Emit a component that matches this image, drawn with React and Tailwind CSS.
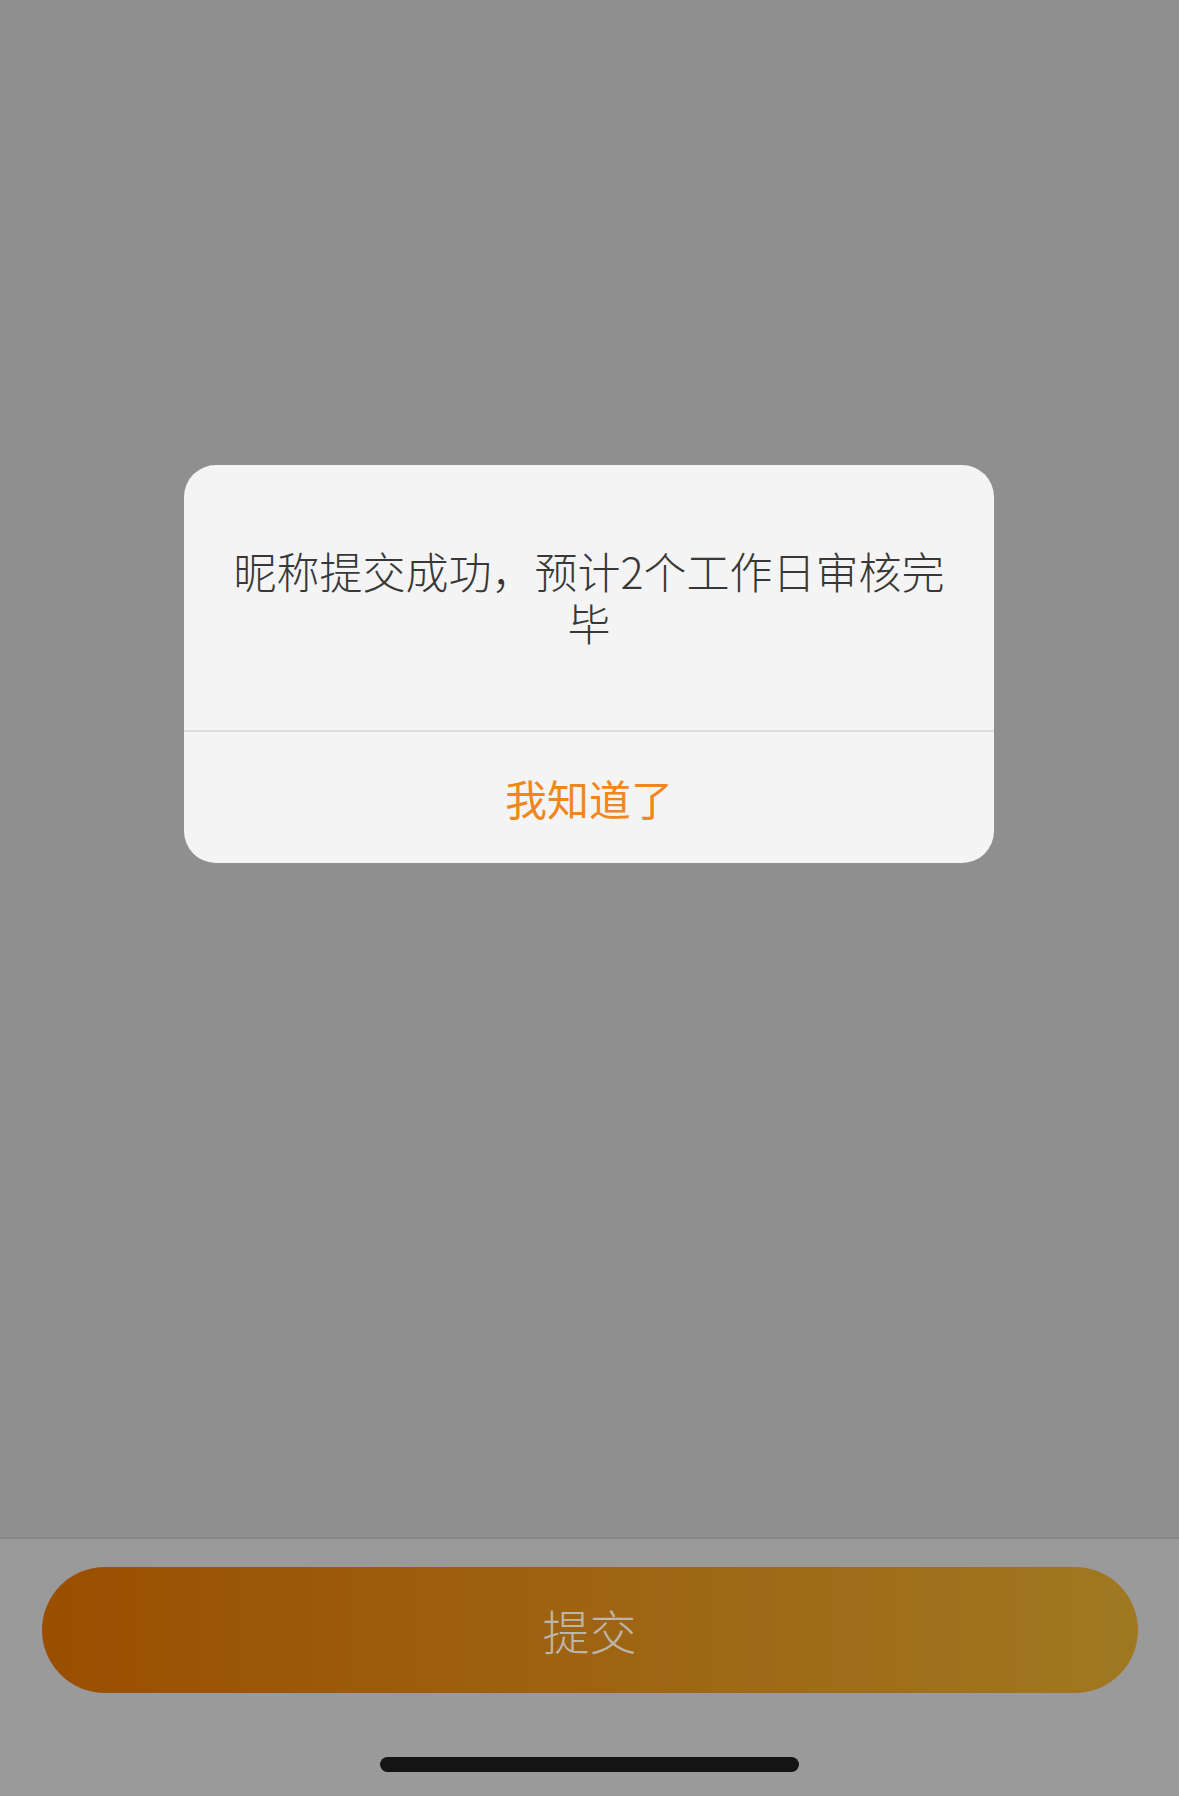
import React from 'react';

const cjk = { fontFamily: '"Noto Sans CJK SC", "Noto Sans", sans-serif' };

export default function App() {
  return (
    <div className="relative flex h-[1796px] w-full flex-col bg-[#9a9a9a]" style={cjk}>
      {/* dimmed page */}
      <div className="flex-1 border-b-2 border-[#868686] bg-[#8f8f8f]" />

      {/* bottom bar */}
      <div className="flex h-[257px] flex-col items-center">
        <button className="mt-[28px] flex h-[126px] w-[1096px] items-center justify-center rounded-full bg-gradient-to-r from-[#9a4e00] to-[#a07822] text-[47px] font-light text-[#bdb6a8]">
          提交
        </button>
        <div className="mt-[64px] h-[15px] w-[419px] rounded-full bg-[#141414]" />
      </div>

      {/* alert dialog */}
      <div className="absolute left-[184px] top-[465px] flex w-[810px] flex-col overflow-hidden rounded-[32px] bg-[#f4f4f4]">
        <div className="flex h-[267px] items-center justify-center border-b-2 border-[#dddddd] px-[46px] pb-[4px]">
          <p className="text-center text-[43px] font-light leading-[52px] text-[#383838]">
            昵称提交成功，预计2个工作日审核完毕
          </p>
        </div>
        <button className="flex h-[131px] items-center justify-center text-[42px] text-[#f0871c]">
          我知道了
        </button>
      </div>
    </div>
  );
}
